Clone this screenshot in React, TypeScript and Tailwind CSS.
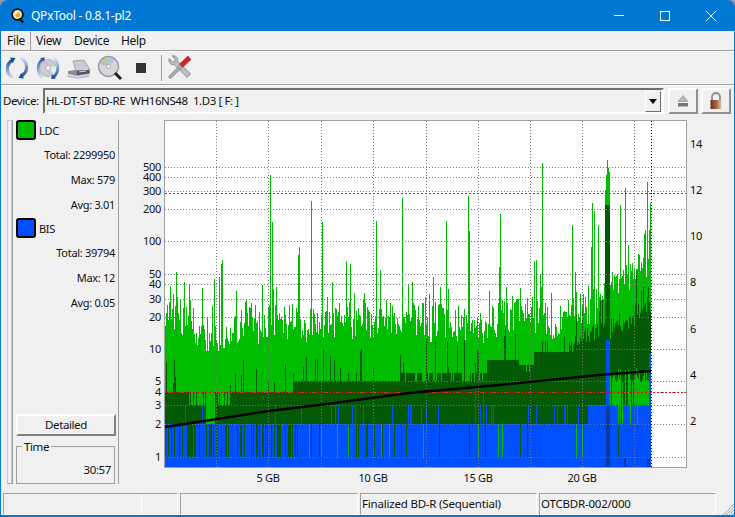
import { ReactNode } from "react";

// seeded random so the trace stays the same between runs
let seed = 20483;
function rnd() {
  seed = (seed + 0x6d2b79f5) | 0;
  let t = Math.imul(seed ^ (seed >>> 15), 1 | seed);
  t = (t + Math.imul(t ^ (t >>> 7), 61 | t)) ^ t;
  return ((t ^ (t >>> 14)) >>> 0) / 4294967296;
}

const PLOT = { left: 166, right: 687, top: 121, bottom: 467, end: 652 };

const spikes: Record<number, number> = {
  171: 286, 177: 272, 185: 282, 203: 288, 215: 279, 220: 277, 222: 264, 223: 260, 271: 175, 273: 222, 277: 287,
  299: 255, 300: 247, 312: 201, 323: 222, 333: 282, 347: 261, 351: 264, 377: 221, 381: 270, 403: 198, 409: 284,
  413: 282, 430: 294, 434: 277, 447: 221, 469: 196, 470: 231, 500: 267, 501: 214, 507: 287, 535: 261, 537: 260,
  541: 274, 543: 163, 573: 225, 592: 247, 593: 203, 595: 211, 599: 225, 606: 190, 607: 175, 608: 160, 609: 168,
  610: 172, 621: 205, 626: 188, 640: 255, 648: 182, 650: 230, 651: 203,
};

let wander = 0;

function lightTop(x: number) {
  wander = wander * 0.8 + (rnd() - 0.5) * 6;
  if (spikes[x]) return spikes[x];
  let y = 321;
  let spread = 18;
  if (x >= 195 && x < 235) { y = 336; spread = 13; }
  else if (x >= 570 && x < 600) { y = 308; }
  else if (x >= 600) { y = 294 - (x - 600) * 0.6; spread = 12; }
  if (rnd() < 0.08) return y - 16 - rnd() * 22;
  return y + wander + (rnd() - 0.5) * spread * 2;
}

function darkTop(x: number) {
  if (x < 198 || (x >= 233 && x < 295)) return 392;
  if (x < 233) return 405;
  if (x < 400) return 381;
  if (x < 488) return rnd() < 0.25 ? 381 : 373;
  if (x < 520) return 360;
  if (x < 535) return rnd() < 0.4 ? 372 : 365;
  if (x < 570) return 352;
  if (x < 600) return 345 - (x - 570) * 0.5 + (rnd() - 0.5) * 18;
  return 332 - (x - 600) * 0.5 + (rnd() - 0.5) * 26;
}

function buildTrace() {
  let light = "";
  let dark = "";
  let blue = "";
  const col = (x: number, from: number, to: number) => `M${x + 0.5} ${from}V${to}`;

  for (let x = PLOT.left; x < PLOT.end; x++) {
    const lt = lightTop(x);
    light += col(x, lt, PLOT.bottom);

    let dt = darkTop(x);
    if (x >= 198 && x < 233 && rnd() < 0.25) dt = 392;
    if (x >= 207 && x < 216) dt = 424;
    if (x > 188 && x < 198 && rnd() < 0.35) dt = 405;
    let spikeDark = dt;
    if (rnd() < 0.1) spikeDark = Math.max(lt + 4, dt - 8 - rnd() * 26);
    if (x >= 606 && x < 611) spikeDark = 205;
    let darkBottom = 424;
    if (x >= 610 && rnd() < 0.75) darkBottom = 368 + rnd() * 15;
    if (dt < 424) dark += col(x, Math.min(spikeDark, dt), darkBottom);

    // blue runs to 2 with cuts below it, and steps up to 3 towards the end of the disc
    const cutChance = x < 300 ? 0.36 : x < 440 ? 0.14 : x < 530 ? 0.06 : 0.012;
    if (rnd() < cutChance) {
      if (x > 300 && rnd() < 0.35) light += col(x, 424, 457);
      else dark += col(x, 424, 457);
      blue += col(x, 457, PLOT.bottom);
    } else {
      let bt = 424;
      const stepChance = x < 300 ? 0.02 : x < 400 ? 0.05 : x < 590 ? 0.12 : 0.9;
      if (rnd() < stepChance) bt = 405;
      if (x > 400 && x < 620 && rnd() < 0.03) bt = 392 - rnd() * 10;
      if (x >= 607 && x < 611) bt = 340;
      if (x >= 650) bt = 354;
      blue += col(x, bt, PLOT.bottom);
    }
  }
  return { light, dark, blue };
}

const trace = buildTrace();

const leftTicks = [
  [500, 167], [400, 177], [300, 191], [200, 209], [100, 241], [50, 274], [40, 284], [30, 299],
  [20, 317], [10, 349], [5, 381], [4, 392], [3, 405], [2, 424], [1, 457],
];
const rightTicks = [[14, 144], [12, 190], [10, 236], [8, 282], [6, 329], [4, 375], [2, 421]];
const vGrid = [217, 269, 322, 374, 427, 479, 531, 583, 635];
const gbTicks = [[269, "5 GB"], [374, "10 GB"], [479, "15 GB"], [583, "20 GB"]] as const;

function Chart() {
  const { left, right, top, bottom, end } = PLOT;
  return (
    <svg viewBox="122 119 613 372" className="w-[613px] h-[372px] shrink-0">
      <rect x={left} y={top} width={right - left} height={bottom - top} fill="#ffffff" />
      <g shapeRendering="crispEdges" fill="none" strokeWidth={1}>
        <path d={trace.light} stroke="#00bc00" />
        <path d={trace.dark} stroke="#045a04" />
        <path d={trace.blue} stroke="#0050ff" />
        <path d="M607.5 405V467M608.5 405V467M609.5 405V467M610.5 405V467M625.5 458V467M626.5 458V467M648.5 458V467M649.5 458V467M650.5 458V467" stroke="#0c3a9c" />
        {leftTicks.map(([, y]) => (
          <line key={y} x1={left} x2={right} y1={y + 0.5} y2={y + 0.5} stroke="#787878" strokeDasharray="1 2" />
        ))}
        {vGrid.map((x) => (
          <line key={x} x1={x + 0.5} x2={x + 0.5} y1={top} y2={bottom} stroke="#787878" strokeDasharray="1 2" />
        ))}
        <line x1={left} x2={right} y1={392.5} y2={392.5} stroke="#ff0000" strokeDasharray="2 2" />
        <line x1={left} x2={right} y1={193.5} y2={193.5} stroke="#ee1010" strokeDasharray="2 2" />
        <line x1={end + 0.5} x2={end + 0.5} y1={top} y2={bottom} stroke="#000000" strokeDasharray="1 2" />
      </g>
      <polyline
        points="166,427 270,411 320,405 410,393 500,385 600,375 652,371"
        fill="none"
        stroke="#000000"
        strokeWidth={2.4}
      />
      <rect x={165.5} y={120.5} width={522} height={347} fill="none" stroke="#a0a0a0" strokeWidth={1} shapeRendering="crispEdges" />
      <g className="text-[11px] fill-[#111111]">
        {leftTicks.map(([v, y]) => (
          <text key={v} x={162} y={y + 4} textAnchor="end">{v}</text>
        ))}
        {rightTicks.map(([v, y]) => (
          <text key={v} x={691} y={y + 4}>{v}</text>
        ))}
        {gbTicks.map(([x, label]) => (
          <text key={label} x={x} y={482} textAnchor="middle">{label}</text>
        ))}
      </g>
    </svg>
  );
}

function AppIcon() {
  return (
    <svg viewBox="0 0 14 15" className="w-[14px] h-[15px]">
      <circle cx="6.5" cy="6.5" r="5.4" fill="#f4e7b0" stroke="#111111" strokeWidth="1.8" />
      <circle cx="6.8" cy="7" r="2.4" fill="#e6a92a" />
      <circle cx="5" cy="4.6" r="1.3" fill="#ffffff" />
      <path d="M8 10.5l4.5 4" stroke="#111111" strokeWidth="2" />
    </svg>
  );
}

function RefreshIcon() {
  return (
    <svg viewBox="0 0 26 26" className="w-[26px] h-[26px]">
      <defs>
        <linearGradient id="arcLeft" x1="0" y1="1" x2="0" y2="0">
          <stop offset="0" stopColor="#d2e0f2" />
          <stop offset="1" stopColor="#1d4f9f" />
        </linearGradient>
        <linearGradient id="arcRight" x1="0" y1="0" x2="0" y2="1">
          <stop offset="0" stopColor="#d2e0f2" />
          <stop offset="1" stopColor="#1d4f9f" />
        </linearGradient>
      </defs>
      <path d="M9 5C2 8.5 1 18 9 23" fill="none" stroke="url(#arcLeft)" strokeWidth="3.2" />
      <path d="M6 2.5l5.5.5-2.8 5z" fill="#1d4f9f" />
      <path d="M17 21C24 17.5 25 8 17 3" fill="none" stroke="url(#arcRight)" strokeWidth="3.2" />
      <path d="M20 23.5l-5.5-.5 2.8-5z" fill="#1d4f9f" />
    </svg>
  );
}

function DiscRefreshIcon() {
  return (
    <svg viewBox="0 0 26 26" className="w-[26px] h-[26px]">
      <defs>
        <linearGradient id="discArcLeft" x1="0" y1="1" x2="0" y2="0">
          <stop offset="0" stopColor="#d2e0f2" />
          <stop offset="1" stopColor="#2c5fab" />
        </linearGradient>
        <linearGradient id="discArcRight" x1="0" y1="0" x2="0" y2="1">
          <stop offset="0" stopColor="#d2e0f2" />
          <stop offset="1" stopColor="#1d4f9f" />
        </linearGradient>
      </defs>
      <circle cx="13" cy="13" r="8.5" fill="#c9ced4" stroke="#8d949c" strokeWidth="0.6" />
      <path d="M13 13L7 7.5A8.5 8.5 0 0 1 13 4.5z" fill="#e4b8d2" />
      <path d="M13 13L21 11A8.5 8.5 0 0 1 19 19z" fill="#e6e9ee" />
      <circle cx="13" cy="13" r="2.6" fill="#ffffff" stroke="#868c94" strokeWidth="0.7" />
      <path d="M8 4C2 8 1 17 7.5 23" fill="none" stroke="url(#discArcLeft)" strokeWidth="2.6" />
      <path d="M18 22.5C24 18 25 9 19 3.5" fill="none" stroke="url(#discArcRight)" strokeWidth="2.6" />
      <path d="M5 3l5-.5-1 4.5z" fill="#2c5fab" />
      <path d="M21 23.5l-5 .5 1-4.5z" fill="#1d4f9f" />
    </svg>
  );
}

function DriveIcon() {
  return (
    <svg viewBox="0 0 26 26" className="w-[26px] h-[26px]">
      <path d="M7 6l11-1 6 10-14 2z" fill="#c9ccd2" stroke="#7c8088" strokeWidth="0.6" />
      <path d="M2 16l8-1 14 0v4l-13 2-9-2z" fill="#8b8f95" />
      <path d="M11 16l12-1v3l-12 2z" fill="#50545a" />
      <path d="M1 20l10 2 13-2-1 2-12 1.5-9-1.5z" fill="#b5b8bd" />
      <path d="M13 17l7-1" stroke="#d9dbdf" strokeWidth="1" />
    </svg>
  );
}

function ScanIcon() {
  return (
    <svg viewBox="0 0 26 26" className="w-[26px] h-[26px]">
      <circle cx="11.5" cy="11.5" r="10" fill="#d3d6da" stroke="#9a9ea4" strokeWidth="1.4" />
      <path d="M11.5 11.5L5 5A9 9 0 0 1 12 2.5z" fill="#a9cf9e" />
      <path d="M11.5 11.5L3 9A9 9 0 0 1 5 5z" fill="#e0a8c4" />
      <path d="M11.5 11.5L12 2.5A9 9 0 0 1 18 5z" fill="#a9c6e8" />
      <circle cx="11.5" cy="11.5" r="2" fill="#f5f5f5" stroke="#8a8e94" strokeWidth="0.6" />
      <path d="M18 18l6 6" stroke="#1c1c1c" strokeWidth="3" />
    </svg>
  );
}

function ToolsIcon() {
  return (
    <svg viewBox="0 0 26 26" className="w-[26px] h-[26px]">
      <path d="M3 3.5l3.5 3.5 2.2-.6.6-2.2-3.2-3.2c3.2-1 6.2 1.6 5.5 5l13 13-3.5 3.5-13-13c-3.2.8-6-2.2-5.1-6z" fill="#b9bec4" stroke="#6f747a" strokeWidth="0.7" />
      <path d="M25 4.5l-3-3.5-8.5 8 3.2 3.2z" fill="#d8242a" stroke="#8f1115" strokeWidth="0.5" />
      <path d="M14 10l2.2 2.2-11 11c-1 1-3.2-1-2.2-2.2z" fill="#a6abb2" stroke="#666a70" strokeWidth="0.5" />
    </svg>
  );
}

function EjectIcon() {
  return (
    <svg viewBox="0 0 14 14" className="w-[14px] h-[14px]">
      <path d="M7 1.5l5 6H2z" fill="#b6b6b6" stroke="#8a8a8a" strokeWidth="0.6" />
      <rect x="2" y="9" width="10" height="3.5" fill="#777777" />
    </svg>
  );
}

function LockIcon() {
  return (
    <svg viewBox="0 0 14 18" className="w-[14px] h-[18px]">
      <defs>
        <linearGradient id="lockBody" x1="0" y1="0" x2="1" y2="0">
          <stop offset="0" stopColor="#6d2f18" />
          <stop offset="0.55" stopColor="#a5683f" />
          <stop offset="1" stopColor="#e0cdb5" />
        </linearGradient>
      </defs>
      <path d="M3 8V5a4 4 0 0 1 8 0v3" fill="none" stroke="#8c8c8c" strokeWidth="1.8" />
      <rect x="1.5" y="8" width="11" height="9" fill="url(#lockBody)" />
    </svg>
  );
}

function ToolButton({ children }: { children: ReactNode }) {
  return <div className="w-[31px] h-full flex items-center justify-center">{children}</div>;
}

function Stat({ label, value }: { label: string; value: string }) {
  return (
    <div className="h-[25px] flex items-center justify-end pr-[3px] pt-[2px]">
      {label}: {value}
    </div>
  );
}

function LegendRow({ fill, label }: { fill: string; label: string }) {
  return (
    <div className="h-[20px] flex items-center gap-[3px]">
      <div className={`w-[20px] h-[20px] rounded-[3px] border-2 border-black ${fill}`} />
      <span className="pt-[2px]">{label}</span>
    </div>
  );
}

function StatusCell({ className, children }: { className: string; children?: ReactNode }) {
  return (
    <div className={`h-[22px] border border-t-[#a0a0a0] border-l-[#a0a0a0] border-r-white border-b-white pl-[1px] flex items-center ${className}`}>
      {children}
    </div>
  );
}

export default function App() {
  return (
    <div className="w-[735px] h-[517px] bg-[#8f9aa6] overflow-hidden">
      <div className="w-full h-full rounded-t-[8px] bg-[#0078d4] flex flex-col px-[1px] pb-[2px] font-['Noto_Sans',sans-serif] text-[11px] tracking-[-0.3px] text-[#111111]">
        <div className="h-[31px] shrink-0 flex items-center text-white text-[12px] tracking-[-0.25px]">
          <div className="ml-[10px] mr-[6px]">
            <AppIcon />
          </div>
          <span>QPxTool - 0.8.1-pl2</span>
          <div className="flex-1" />
          <div className="w-[46px] flex justify-center">
            <div className="w-[10px] h-px bg-white" />
          </div>
          <div className="w-[46px] flex justify-center">
            <div className="w-[10px] h-[10px] border border-white" />
          </div>
          <div className="w-[46px] flex justify-center">
            <svg viewBox="0 0 10 10" className="w-[10px] h-[10px]">
              <path d="M0 0l10 10M10 0L0 10" stroke="#ffffff" strokeWidth="0.9" />
            </svg>
          </div>
        </div>

        <div className="flex-1 min-h-0 bg-[#f0f0f0] flex flex-col">
          <div className="h-[20px] shrink-0 flex items-stretch border-b border-b-[#a0a0a0] text-[12px]">
            <div className="w-[30px] border-r border-r-[#a0a0a0] border-l border-l-white border-t border-t-white pl-[5px] flex items-center">File</div>
            <div className="w-[37px] pl-[5px] flex items-center">View</div>
            <div className="w-[47px] pl-[6px] flex items-center">Device</div>
            <div className="pl-[6px] flex items-center">Help</div>
          </div>

          <div className="h-[34px] shrink-0 flex items-center border-t border-t-white border-b border-b-[#a0a0a0] pl-0">
            <ToolButton><RefreshIcon /></ToolButton>
            <ToolButton><DiscRefreshIcon /></ToolButton>
            <ToolButton><DriveIcon /></ToolButton>
            <ToolButton><ScanIcon /></ToolButton>
            <ToolButton>
              <div className="w-[10px] h-[10px] bg-[#333333]" />
            </ToolButton>
            <div className="w-px h-[26px] bg-[#a0a0a0] ml-[5px] mr-[1px]" />
            <ToolButton><ToolsIcon /></ToolButton>
          </div>

          <div className="h-[34px] shrink-0 flex items-center border-t border-t-white pl-[2px] pb-[3px] text-[11.5px] tracking-[-0.4px]">
            <span className="w-[40px]">Device:</span>
            <div className="w-[621px] h-[26px] border-2 border-t-[#707070] border-l-[#707070] border-r-white border-b-white flex items-center justify-between pl-[1px] pr-[1px]">
              <span className="whitespace-pre">HL-DT-ST BD-RE  WH16NS48  1.D3 [ F: ]</span>
              <div className="w-[16px] h-[21px] bg-[#f0f0f0] border border-t-white border-l-white border-r-[#707070] border-b-[#707070] flex items-center justify-center">
                <div className="w-0 h-0 border-x-[4px] border-x-transparent border-t-[5px] border-t-black" />
              </div>
            </div>
            <div className="w-[30px] h-[26px] ml-[4px] border-2 border-t-white border-l-white border-r-[#909090] border-b-[#909090] flex items-center justify-center">
              <EjectIcon />
            </div>
            <div className="w-[30px] h-[26px] ml-[3px] border-2 border-t-white border-l-white border-r-[#909090] border-b-[#909090] flex items-center justify-center">
              <LockIcon />
            </div>
          </div>

          <div className="flex-1 min-h-0 flex items-start">
            <div className="w-[5px] h-[364px] mt-[1px] ml-[6px] border border-[#c8c8c8] border-b-[#a0a0a0]" />
            <div className="w-[108px] h-[364px] mt-[1px] border-x border-x-[#a0a0a0] flex flex-col pl-[3px]">
              <LegendRow fill="bg-[#00bb00]" label="LDC" />
              <div className="h-[2px]" />
              <Stat label="Total" value="2299950" />
              <Stat label="Max" value="579" />
              <Stat label="Avg" value="3.01" />
              <div className="h-[1px]" />
              <LegendRow fill="bg-[#0050ff]" label="BIS" />
              <div className="h-[2px]" />
              <Stat label="Total" value="39794" />
              <Stat label="Max" value="12" />
              <Stat label="Avg" value="0.05" />
              <div className="flex-1" />
              <div className="w-[100px] h-[22px] border-2 border-t-white border-l-white border-r-[#808080] border-b-[#808080] flex items-center justify-center text-[11.5px] tracking-[-0.4px]">
                Detailed
              </div>
              <div className="relative w-[99px] h-[38px] mt-[10px] border border-[#a0a0a0] flex items-end justify-end pr-[3px] pb-[5px] text-[11.5px] tracking-[-0.4px]">
                <span className="absolute left-[5px] -top-[9px] bg-[#f0f0f0] px-[2px]">Time</span>
                30:57
              </div>
            </div>
            <div className="ml-[2px]">
              <Chart />
            </div>
          </div>

          <div className="relative h-[24px] shrink-0 flex items-start pt-[2px] pl-[2px] gap-[2px] text-[11.5px] tracking-[-0.2px]">
            <StatusCell className="w-[175px] relative">
              <div className="absolute left-[137px] top-0 bottom-0 w-px bg-white" />
            </StatusCell>
            <StatusCell className="w-[178px]" />
            <StatusCell className="w-[177px]">Finalized BD-R (Sequential)</StatusCell>
            <StatusCell className="w-[177px]">OTCBDR-002/000</StatusCell>
            <svg viewBox="0 0 12 12" className="absolute right-0 bottom-0 w-[12px] h-[12px]">
              <path d="M12 1L1 12M12 4L4 12M12 7L7 12M12 10L10 12" stroke="#a8a8a8" strokeWidth="1" />
            </svg>
          </div>
        </div>
      </div>
    </div>
  );
}
